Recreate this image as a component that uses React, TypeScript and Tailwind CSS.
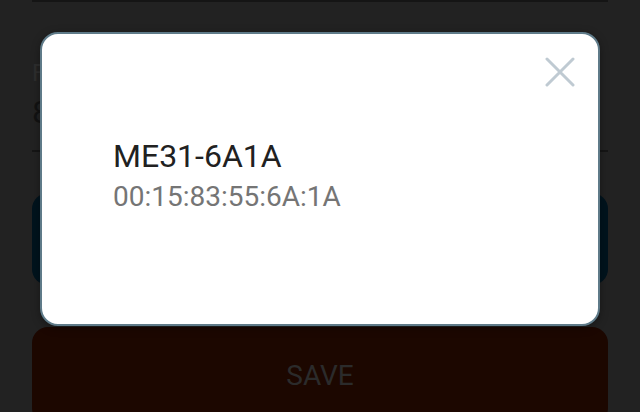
export default function App() {
  return (
    <div className="relative h-[412px] w-[640px] overflow-hidden bg-[#222222] font-['Roboto',sans-serif]">
      {/* dimmed form behind the dialog */}
      <div className="px-8">
        <div className="h-[2px] bg-[#151515]" />
        <div className="pt-[59px]">
          <p className="text-[24px] leading-none text-[#2e2e2e]">Frequency</p>
          <p className="mt-[11px] text-[32px] leading-none text-[#121212]">868 MHz</p>
          <div className="mt-[22px] h-[2px] bg-[#151515]" />
        </div>
        <div className="mt-[41px] h-[92px] rounded-[16px] bg-[#00131d]" />
        <div className="mt-[42px] flex h-[97px] items-center justify-center rounded-[16px] bg-[#1c0700]">
          <span className="text-[28px] leading-none text-[#2b2b2b]">SAVE</span>
        </div>
      </div>

      {/* dialog */}
      <div className="absolute left-[40px] top-[32px] h-[294px] w-[560px] rounded-[18px] border-2 border-[#5f7b89] bg-white shadow-[0_2px_8px_rgba(0,0,0,0.35)]">
        <button
          type="button"
          aria-label="Close"
          className="absolute right-[23px] top-[23px] h-[30px] w-[30px]"
        >
          <svg viewBox="0 0 30 30" className="h-[30px] w-[30px]">
            <path
              d="M2 2 L28 28 M28 2 L2 28"
              stroke="#bfcad2"
              strokeWidth="3"
              strokeLinecap="round"
              fill="none"
            />
          </svg>
        </button>
        <div className="pl-[71px] pt-[106px]">
          <p className="text-[32px] leading-none text-[#212121]">ME31-6A1A</p>
          <p className="mt-[11px] text-[28px] leading-none text-[#757575]">00:15:83:55:6A:1A</p>
        </div>
      </div>
    </div>
  );
}
